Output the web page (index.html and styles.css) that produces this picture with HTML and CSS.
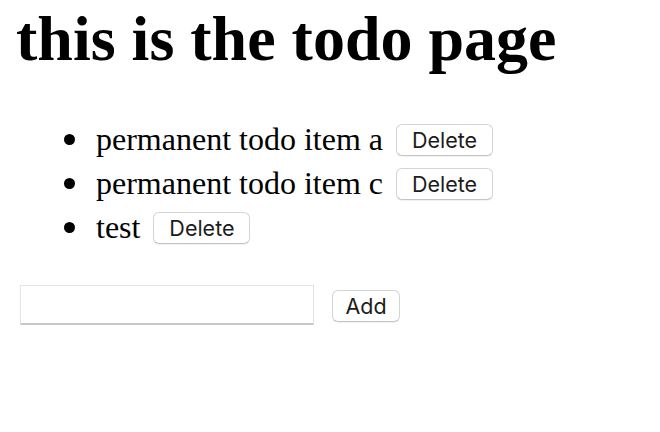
FILE: index.html
```html
<!DOCTYPE html>
<html>
<head>
<meta charset="utf-8">
<link rel="stylesheet" href="styles.css">
</head>
<body>
<div class="page">
  <h1 class="title">this is the todo page</h1>
  <ul class="todos">
    <li class="todo"><span class="todo-text">permanent todo item a</span><button class="btn btn-delete">Delete</button></li>
    <li class="todo"><span class="todo-text">permanent todo item c</span><button class="btn btn-delete">Delete</button></li>
    <li class="todo"><span class="todo-text">test</span><button class="btn btn-delete">Delete</button></li>
  </ul>
  <form class="add-form">
    <input class="add-input" type="text">
    <button class="btn btn-add" type="button">Add</button>
  </form>
</div>
</body>
</html>
```

FILE: styles.css
```css
html, body {
  margin: 0;
  padding: 0;
  background: #ffffff;
}

.page {
  padding: 0 16px;
  font-family: "Liberation Serif", "Times New Roman", serif;
  color: #000;
}

.title {
  margin: 2px 0 0 0;
  font-size: 64px;
  line-height: 74px;
  font-weight: bold;
}

.todos {
  margin: 41px 0 0 0;
  padding-left: 80px;
  list-style: none;
}

.todo {
  font-size: 32px;
  line-height: 44px;
  height: 44px;
  display: flex;
  align-items: center;
}

.todo::before {
  content: "";
  flex: none;
  width: 11px;
  height: 11px;
  border-radius: 50%;
  background: #000;
  margin-left: -32px;
  margin-right: 21px;
}

.todo-text {
  white-space: nowrap;
}

.btn {
  font-family: "Inter", "Liberation Sans", sans-serif;
  font-size: 21.5px;
  color: #1c1c1c;
  background: #fff;
  border: 1px solid #d4d4d4;
  border-bottom-color: #c4c4c4;
  border-radius: 6px;
  box-shadow: 0 1px 1px rgba(0, 0, 0, 0.06);
  padding: 0;
  height: 32px;
  line-height: 30px;
}

.btn-delete {
  flex: none;
  width: 97px;
  margin: 2px 0 0 13px;
}

.add-form {
  margin: 36px 0 0 4px;
  display: flex;
  align-items: flex-start;
}

.add-input {
  box-sizing: border-box;
  width: 294px;
  height: 40px;
  margin: 0;
  border: 1px solid #e3e3e3;
  border-bottom: 2px solid #c8c8c8;
  padding: 0 8px;
  font-size: 20px;
  outline: none;
}

.btn-add {
  width: 68px;
  margin: 5px 0 0 18px;
}
```
